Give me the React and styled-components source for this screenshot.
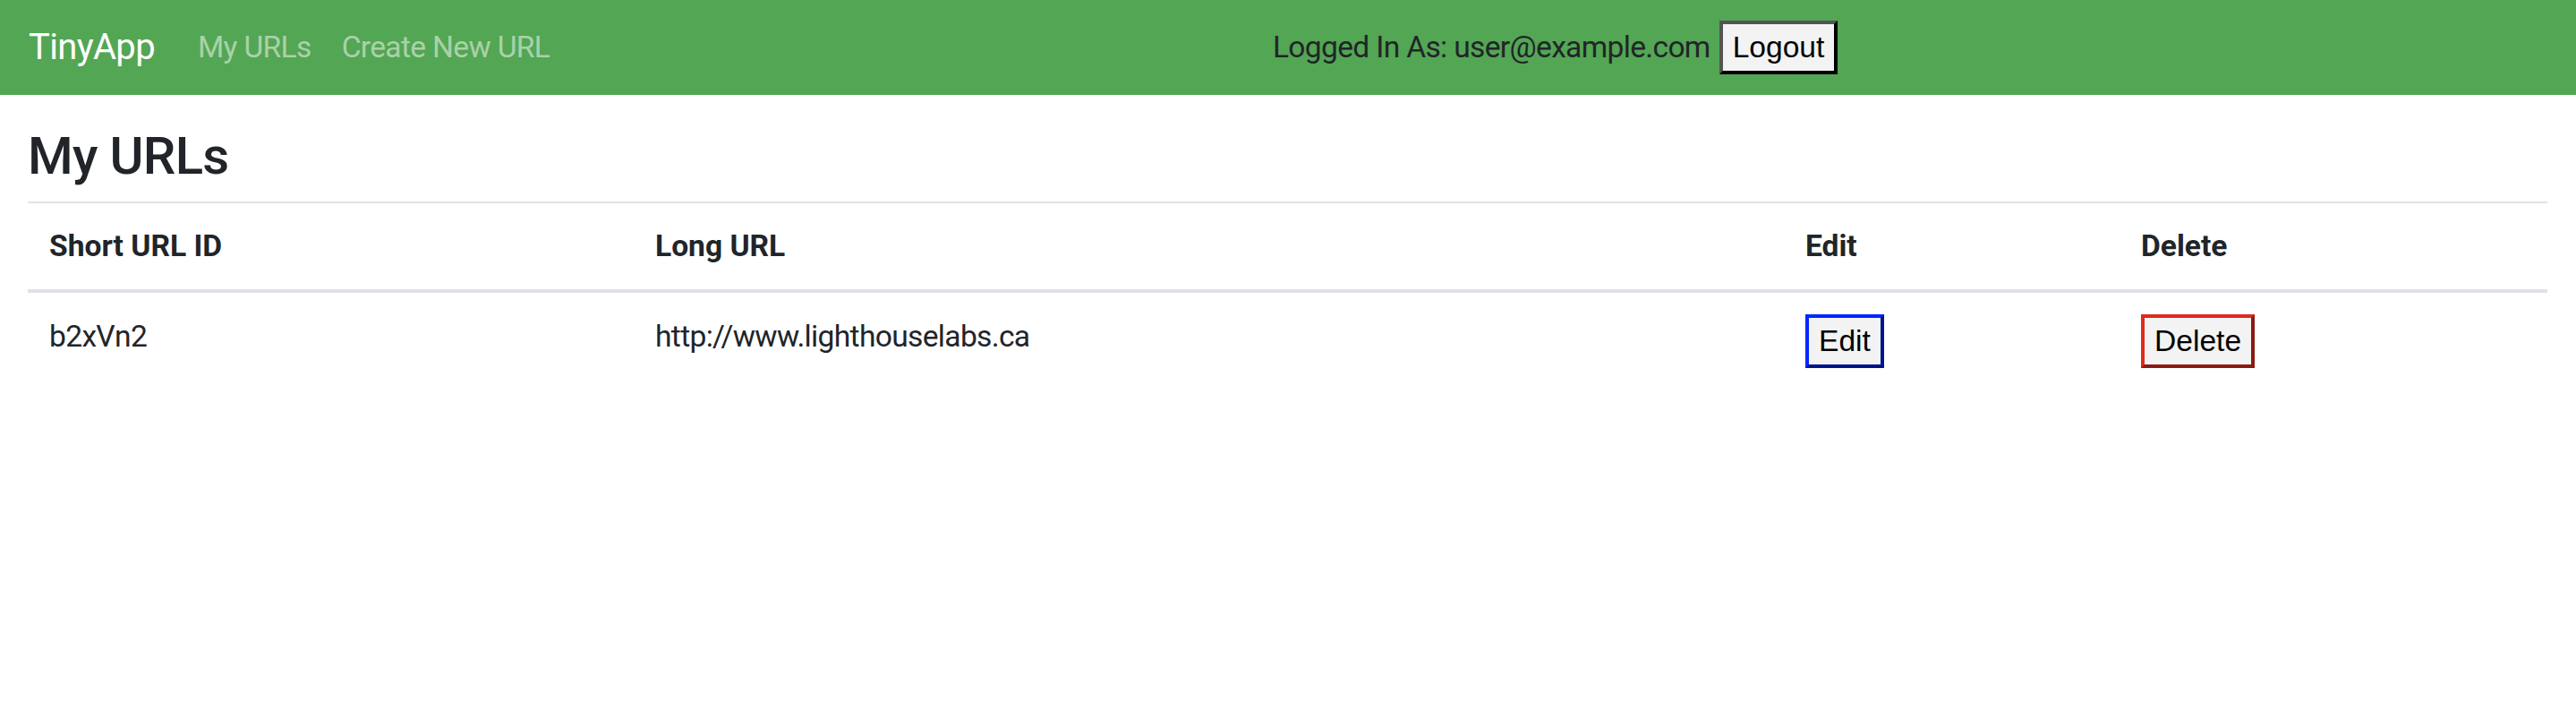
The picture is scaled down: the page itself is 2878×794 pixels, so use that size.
import React from 'react'
import styled, { createGlobalStyle } from 'styled-components'

const GlobalStyle = createGlobalStyle`
  html, body {
    margin: 0;
    padding: 0;
    background: #fff;
  }
  body {
    font-family: Roboto, "Noto Sans", "Liberation Sans", sans-serif;
    font-size: 33.6px;
    line-height: 1.5;
    letter-spacing: -0.02em;
    color: #212529;
  }
`

const Navbar = styled.nav`
  display: flex;
  align-items: center;
  height: 106px;
  padding: 0 34px 0 32px;
  background: #53a653;
  box-sizing: border-box;
`

const Brand = styled.a`
  font-size: 40px;
  color: #fff;
  text-decoration: none;
  margin-right: 31px;
  white-space: nowrap;
`

const NavLinks = styled.ul`
  display: flex;
  list-style: none;
  margin: 0;
  padding: 0;
`

const NavLink = styled.a`
  display: block;
  padding: 0 17px;
  color: rgba(255, 255, 255, 0.5);
  text-decoration: none;
  white-space: nowrap;
`

const UserArea = styled.div`
  flex: 1;
  display: flex;
  align-items: center;
  justify-content: center;
  gap: 10px;
`

const UserText = styled.span`
  color: #212529;
  white-space: nowrap;
`

const Button = styled.button`
  font-family: "Liberation Sans", Arial, sans-serif;
  font-size: 33.6px;
  letter-spacing: 0;
  line-height: 40px;
  padding: 6px 11px;
  background: #f3f3f3;
  color: #000;
  border: 4px outset ${(p) => p.$border || '#000'};
  cursor: pointer;
`

const Main = styled.main`
  padding: 34px 32px 0 31px;
`

const Heading = styled.h3`
  font-size: 58px;
  font-weight: 500;
  line-height: 1.2;
  margin: 0 0 15px;
`

const Table = styled.table`
  width: 100%;
  table-layout: fixed;
  border-collapse: collapse;
`

const Th = styled.th`
  box-sizing: border-box;
  width: ${(p) => p.$w}px;
  text-align: left;
  font-weight: 700;
  letter-spacing: 0;
  padding: 23px 24px;
  border-top: 2px solid #dee2e6;
  border-bottom: 4px solid #dee2e6;
  vertical-align: bottom;
`

const Td = styled.td`
  padding: 24px;
  vertical-align: top;
`

const urls = [{ id: 'b2xVn2', long: 'http://www.lighthouselabs.ca' }]

export default function App() {
  return (
    <>
      <GlobalStyle />
      <Navbar>
        <Brand href="#">TinyApp</Brand>
        <NavLinks>
          <li><NavLink href="#">My URLs</NavLink></li>
          <li><NavLink href="#">Create New URL</NavLink></li>
        </NavLinks>
        <UserArea>
          <UserText>Logged In As: user@example.com</UserText>
          <Button>Logout</Button>
        </UserArea>
      </Navbar>
      <Main>
        <Heading>My URLs</Heading>
        <Table>
          <thead>
            <tr>
              <Th $w={677}>Short URL ID</Th>
              <Th $w={1285}>Long URL</Th>
              <Th $w={375}>Edit</Th>
              <Th $w={478}>Delete</Th>
            </tr>
          </thead>
          <tbody>
            {urls.map((u) => (
              <tr key={u.id}>
                <Td>{u.id}</Td>
                <Td>{u.long}</Td>
                <Td><Button $border="#0022e0">Edit</Button></Td>
                <Td><Button $border="#e02a1c">Delete</Button></Td>
              </tr>
            ))}
          </tbody>
        </Table>
      </Main>
    </>
  )
}
